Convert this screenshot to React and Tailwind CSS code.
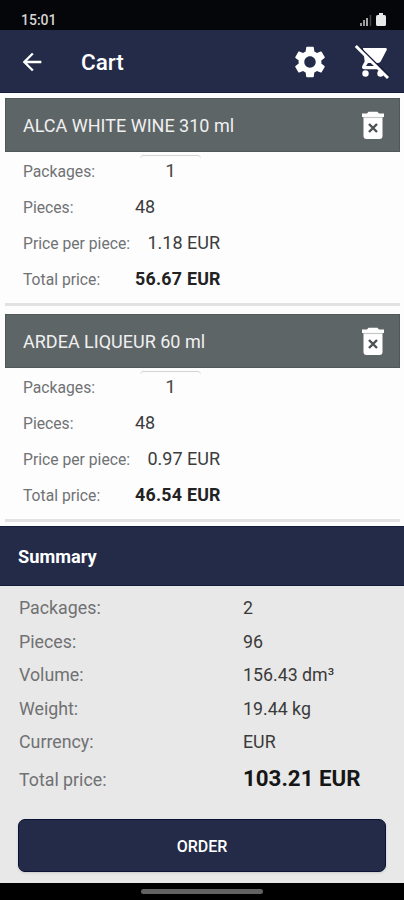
import { MdArrowBack, MdSettings } from 'react-icons/md';

const ITEMS = [
    { id: 1, name: 'ALCA WHITE WINE 310 ml', packages: 1, pieces: 48, price: '1.18 EUR', total: '56.67 EUR' },
    { id: 2, name: 'ARDEA LIQUEUR 60 ml', packages: 1, pieces: 48, price: '0.97 EUR', total: '46.54 EUR' },
];

const SUMMARY = [
    { label: 'Packages:', value: '2' },
    { label: 'Pieces:', value: '96' },
    { label: 'Volume:', value: '156.43 dm³' },
    { label: 'Weight:', value: '19.44 kg' },
    { label: 'Currency:', value: 'EUR' },
];

function TrashIcon() {
    return (
        <svg width="22" height="29" viewBox="0 0 22 29">
            <path d="M0 2.5h5L6.5 0.8h9L17 2.5H22V6H0z" fill="#fff" />
            <path d="M1.5 6h19v19a3 3 0 0 1-3 3h-13a3 3 0 0 1-3-3z" fill="#fff" />
            <path d="M2 6.5h18" stroke="#c4c7c8" strokeWidth="1.2" />
            <path d="M7 13l8 8M15 13l-8 8" stroke="#4b5153" strokeWidth="2.4" />
        </svg>
    );
}

function CartOffIcon() {
    return (
        <svg width="36" height="36" viewBox="0 0 36 36">
            <path d="M9 4h22.500q2 0 1.300 1.800l-6 11.500q-.800 1.700-2.800 1.700H14l-2 3h14v3.200H10q-3-.500-1.500-3.700l2.200-4z" fill="#fff" />
            <circle cx="11.500" cy="29.500" r="3.200" fill="#fff" />
            <circle cx="26.500" cy="29.500" r="3.200" fill="#fff" />
            <path d="M5 3.500L35 33" stroke="#131834" strokeWidth="3" />
            <path d="M1.800 2L34 34" stroke="#fff" strokeWidth="3" />
        </svg>
    );
}

function StatusBar() {
    return (
        <div className="h-[30px] shrink-0 bg-[#050609] flex items-start justify-between pl-[21px] pr-[18px] pt-3">
            <span className="text-[14px] leading-[16px] font-medium text-[#d4d4d4]">15:01</span>
            <div className="flex items-end gap-1 h-[14px]">
                <svg width="12" height="12" viewBox="0 0 12 12">
                    <path d="M1 9v3M4 6v6" stroke="#999" strokeWidth="2" />
                    <path d="M7 4v8" stroke="#a8a8a8" strokeWidth="2" />
                    <path d="M10.5 1v11" stroke="#444" strokeWidth="1.5" />
                </svg>
                <svg width="10" height="13" viewBox="0 0 10 13">
                    <path d="M3 0h4v2h1.5Q10 2 10 4v7.5Q10 13 8.5 13h-7Q0 13 0 11.5V4Q0 2 1.5 2H3z" fill="#e8e8e8" />
                </svg>
            </div>
        </div>
    );
}

function CartItem({ item }) {
    return (
        <div className="h-[208px] border-b-[3px] border-[#e2e2e4]">
            <div className="h-[54px] bg-[#5e6567] border border-[#525859] flex items-center justify-between pl-[17px] pr-[15px]">
                <span className="text-[18px] text-[#f0f0f0] whitespace-nowrap">{item.name}</span>
                <TrashIcon />
            </div>
            <div className="pl-[18px] pt-px text-[15.7px] text-[#707274]">
                <div className="h-9 flex items-center">
                    <span className="w-[117px] pt-px">Packages:</span>
                    <div className="w-[61px] h-8 rounded-t border-t border-[#d3d3d8] flex items-center justify-center text-[19px] text-[#4a4a4a]">
                        <span>{item.packages}</span>
                    </div>
                </div>
                <div className="h-9 flex items-center">
                    <span className="w-28 pt-px">Pieces:</span>
                    <span className="pb-0.5 text-[18px] text-[#3c3c3c]">{item.pieces}</span>
                </div>
                <div className="h-9 flex items-center">
                    <span className="w-28 pt-px">Price per piece:</span>
                    <span className="w-[85px] pb-0.5 text-right text-[18px] text-[#3c3c3c]">{item.price}</span>
                </div>
                <div className="h-9 flex items-center">
                    <span className="w-28 pt-px">Total price:</span>
                    <span className="text-[17.8px] tracking-[0.25px] font-bold text-[#222]">{item.total}</span>
                </div>
            </div>
        </div>
    );
}

export default function App() {
    return (
        <div className="w-full h-[900px] flex flex-col overflow-hidden bg-[#fdfdfd] font-['Roboto',sans-serif]">
            <StatusBar />

            <header className="h-[63px] shrink-0 bg-[#232b48] border-b border-[#151c3c] flex items-center pl-[18px] pr-3.5 pt-px">
                <MdArrowBack size={28} color="#fff" />
                <h1 className="ml-[35px] pt-[3px] text-[22.5px] font-medium text-white">Cart</h1>
                <div className="ml-auto flex items-center gap-[25px]">
                    <MdSettings size={38} color="#fff" />
                    <CartOffIcon />
                </div>
            </header>

            <main className="h-[433px] shrink-0 pt-[5px] pl-[5px] pr-1 space-y-2">
                {ITEMS.map(item => (
                    <CartItem key={item.id} item={item} />
                ))}
            </main>

            <section className="h-[357px] shrink-0 bg-[#e8e8e8]">
                <div className="h-[60px] bg-[#232b48] border-y border-[#151c3c] flex items-center pl-[18px] pt-0.5">
                    <h2 className="text-[18.2px] font-bold text-white">Summary</h2>
                </div>
                <div className="pl-[19px] pt-1.5 text-[17.8px] text-[#707173]">
                    {SUMMARY.map(row => (
                        <div key={row.label} className="h-[33.5px] flex items-center">
                            <span className="w-56">{row.label}</span>
                            <span className="text-[#3a3a3a]">{row.value}</span>
                        </div>
                    ))}
                    <div className="h-[39px] flex items-center">
                        <span className="w-56 pt-[3px]">Total price:</span>
                        <span className="text-[22.3px] font-bold text-[#161616]">103.21 EUR</span>
                    </div>
                </div>
                <div className="px-[18px] pt-5">
                    <button className="w-full h-[53px] rounded-[7px] bg-[#232b48] border border-[#0b1236] shadow-sm flex items-center justify-center pt-1 text-[16px] font-medium text-white">
                        ORDER
                    </button>
                </div>
            </section>

            <footer className="h-[17px] shrink-0 bg-black flex items-center justify-center">
                <div className="w-[122px] h-[5px] rounded-full bg-[#626262]" />
            </footer>
        </div>
    );
}
